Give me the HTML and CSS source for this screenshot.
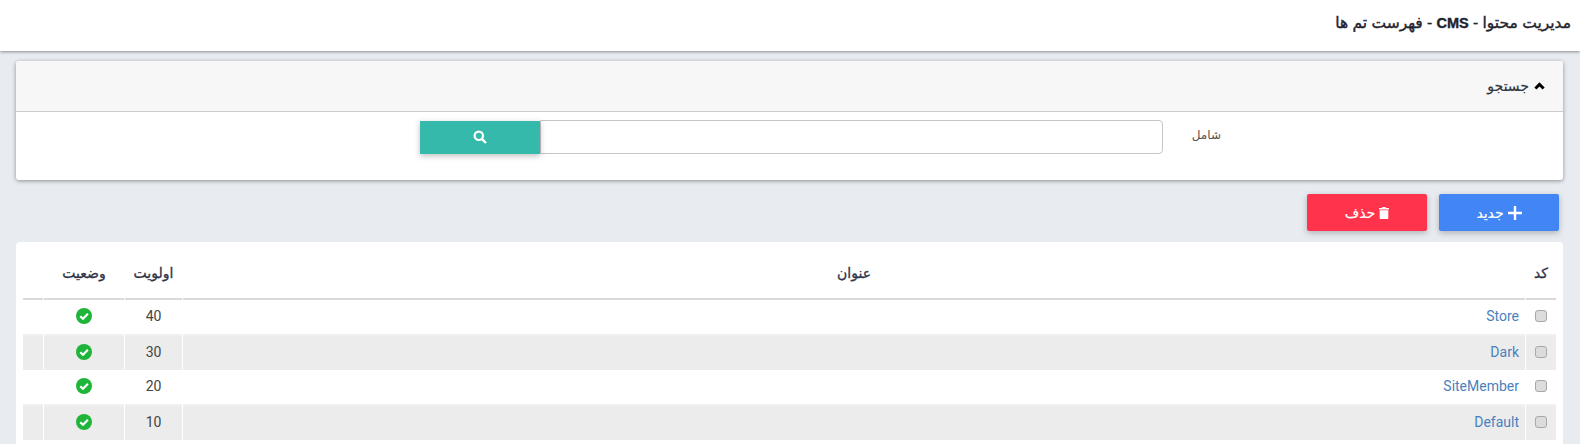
FILE: index.html
```html
<!DOCTYPE html>
<html lang="fa" dir="rtl">
<head>
    <meta charset="UTF-8">
    <title>فهرست تم ها</title>
    <link rel="stylesheet" href="styles.css">
</head>
<body>

    <header class="top-bar">
        <h1>مدیریت محتوا - <b>CMS</b> - فهرست تم ها</h1>
    </header>

    <section class="panel">
        <div class="panel-head">
            <svg class="chevron" viewBox="0 0 12 8"><path d="M1.5 6.8 6 2.2l4.5 4.6" fill="none" stroke="#000" stroke-width="3.2"/></svg>
            <span>جستجو</span>
        </div>
        <div class="panel-body">
            <label class="search-label" for="q">شامل</label>
            <input class="search-input" id="q" type="text">
            <button class="search-btn" type="button" aria-label="جستجو">
                <svg viewBox="0 0 14 14" width="14" height="14"><circle cx="5.8" cy="5.8" r="4.2" fill="none" stroke="#fff" stroke-width="2.2"/><path d="M8.8 8.8 13 13" stroke="#fff" stroke-width="2.4"/></svg>
            </button>
        </div>
    </section>

    <div class="actions">
        <button class="btn btn-new" type="button">
            <svg viewBox="0 0 14 14" width="14" height="14"><path d="M7 0v14M0 7h14" stroke="#fff" stroke-width="2.4"/></svg>
            جدید
        </button>
        <button class="btn btn-del" type="button">
            <svg viewBox="0 0 10 12" width="10" height="12"><path d="M3.5 0h3l.5 1h3v1.4H0V1h3zM.7 3.2h8.6V12H.7z" fill="#fff"/></svg>
            حذف
        </button>
    </div>

    <section class="list-card">
        <table class="list">
            <colgroup>
                <col class="c-check">
                <col>
                <col class="c-priority">
                <col class="c-status">
                <col class="c-empty">
            </colgroup>
            <thead>
                <tr>
                    <th>کد</th>
                    <th>عنوان</th>
                    <th>اولویت</th>
                    <th>وضعیت</th>
                    <th></th>
                </tr>
            </thead>
            <tbody>
                <tr>
                    <td><input class="row-check" type="checkbox"></td>
                    <td class="cell-name"><a href="#">Store</a></td>
                    <td>40</td>
                    <td><svg class="ok" viewBox="0 0 16 16"><circle cx="8" cy="8" r="8" fill="#1fb53a"/><path d="M4.2 8.2 7 10.8l4.9-5" fill="none" stroke="#fff" stroke-width="2.2"/></svg></td>
                    <td></td>
                </tr>
                <tr>
                    <td><input class="row-check" type="checkbox"></td>
                    <td class="cell-name"><a href="#">Dark</a></td>
                    <td>30</td>
                    <td><svg class="ok" viewBox="0 0 16 16"><circle cx="8" cy="8" r="8" fill="#1fb53a"/><path d="M4.2 8.2 7 10.8l4.9-5" fill="none" stroke="#fff" stroke-width="2.2"/></svg></td>
                    <td></td>
                </tr>
                <tr>
                    <td><input class="row-check" type="checkbox"></td>
                    <td class="cell-name"><a href="#">SiteMember</a></td>
                    <td>20</td>
                    <td><svg class="ok" viewBox="0 0 16 16"><circle cx="8" cy="8" r="8" fill="#1fb53a"/><path d="M4.2 8.2 7 10.8l4.9-5" fill="none" stroke="#fff" stroke-width="2.2"/></svg></td>
                    <td></td>
                </tr>
                <tr>
                    <td><input class="row-check" type="checkbox"></td>
                    <td class="cell-name"><a href="#">Default</a></td>
                    <td>10</td>
                    <td><svg class="ok" viewBox="0 0 16 16"><circle cx="8" cy="8" r="8" fill="#1fb53a"/><path d="M4.2 8.2 7 10.8l4.9-5" fill="none" stroke="#fff" stroke-width="2.2"/></svg></td>
                    <td></td>
                </tr>
            </tbody>
        </table>
    </section>

</body>
</html>
```

FILE: styles.css
```css
html, body {
    height: 444px;
    overflow: hidden;
}
body {
    margin: 0;
    background: #e8ebf0;
    font-family: Roboto, "DejaVu Sans", sans-serif;
    color: #3a3f51;
    font-size: 14px;
}
.top-bar {
    height: 51px;
    background: #fff;
    box-shadow: 0 1px 3px rgba(0, 0, 0, 0.4);
    padding: 0 9px;
    display: flex;
    align-items: center;
}
.top-bar h1 {
    margin: 0 0 6px;
    font-family: "Liberation Sans", "DejaVu Sans", sans-serif;
    font-size: 15.5px;
    font-weight: normal;
    -webkit-text-stroke: 0.4px #1f2430;
    color: #1f2430;
}
.top-bar b {
    font-size: 14.5px;
}
.panel {
    margin: 10px 17px 0 16px;
    height: 119px;
    background: #fff;
    border-radius: 3px;
    box-shadow: 0 1px 4px rgba(0, 0, 0, 0.4);
}
.panel-head {
    height: 50px;
    background: #f7f7f7;
    border-bottom: 1px solid #ccc;
    border-radius: 3px 3px 0 0;
    display: flex;
    align-items: center;
    gap: 5px;
    padding: 0 18px;
    font-family: "DejaVu Sans", sans-serif;
    font-size: 14px;
    -webkit-text-stroke: 0.2px #2f3440;
    color: #2f3440;
}
.chevron {
    width: 11px;
    height: 8px;
}
.panel-body {
    display: flex;
    align-items: center;
    padding: 8px 0 0;
}
.search-label {
    width: 58px;
    margin-right: 342px;
    font-size: 12px;
    color: #5a5048;
    padding-bottom: 4px;
}
.search-input {
    box-sizing: border-box;
    width: 623px;
    height: 34px;
    margin: 0;
    border: 1px solid #c6c6c6;
    border-radius: 0 4px 4px 0;
    background: #fff;
    outline: none;
}
.search-btn {
    width: 120px;
    height: 33px;
    border: 0;
    padding: 0;
    background: #35b9aa;
    box-shadow: 0 2px 6px rgba(0, 0, 0, 0.25);
    display: flex;
    align-items: center;
    justify-content: center;
}
.actions {
    display: flex;
    gap: 12px;
    margin: 14px 21px 0 0;
}
.btn {
    width: 120px;
    height: 37px;
    border: 0;
    border-radius: 2px;
    color: #fff;
    font-family: "DejaVu Sans", sans-serif;
    font-size: 14px;
    -webkit-text-stroke: 0.2px #fff;
    display: flex;
    align-items: center;
    justify-content: center;
    gap: 4px;
    box-shadow: 0 2px 6px rgba(0, 0, 0, 0.25);
}
.btn-new {
    background: #4285f4;
}
.btn-del {
    background: #ff334b;
}
.list-card {
    margin: 11px 17px 0 16px;
    background: #fff;
    border-radius: 4px 4px 0 0;
    padding: 0 6px;
    height: 220px;
}
.list {
    width: 100%;
    border-collapse: separate;
    border-spacing: 1px 0;
    table-layout: fixed;
}
.c-check {
    width: 30px;
}
.c-priority {
    width: 57px;
}
.c-status {
    width: 80px;
}
.c-empty {
    width: 20px;
}
.list th {
    height: 50px;
    border-bottom: 2px solid #d9d9d9;
    padding: 6px 0 0;
    font-family: "DejaVu Sans", sans-serif;
    font-size: 14px;
    font-weight: normal;
    -webkit-text-stroke: 0.3px #2f3448;
    color: #2f3448;
    text-align: center;
}
.list td {
    height: 31px;
    padding: 0 0 3px;
    border-bottom: 2px solid #f0f0f0;
    text-align: center;
    vertical-align: middle;
    color: #444;
}
.list tbody tr:nth-child(even) td {
    background: #ececec;
    border-bottom: 0;
}
.list td.cell-name {
    text-align: right;
    padding-right: 6px;
}
.cell-name a {
    color: #4b7fbd;
    text-decoration: none;
}
.ok {
    display: block;
    width: 16px;
    height: 16px;
    margin: auto;
}
.row-check {
    appearance: none;
    display: block;
    box-sizing: border-box;
    width: 12px;
    height: 12px;
    margin: auto;
    background: #dcdcdc;
    border: 1px solid #a8a8a8;
    border-radius: 3px;
}
```
